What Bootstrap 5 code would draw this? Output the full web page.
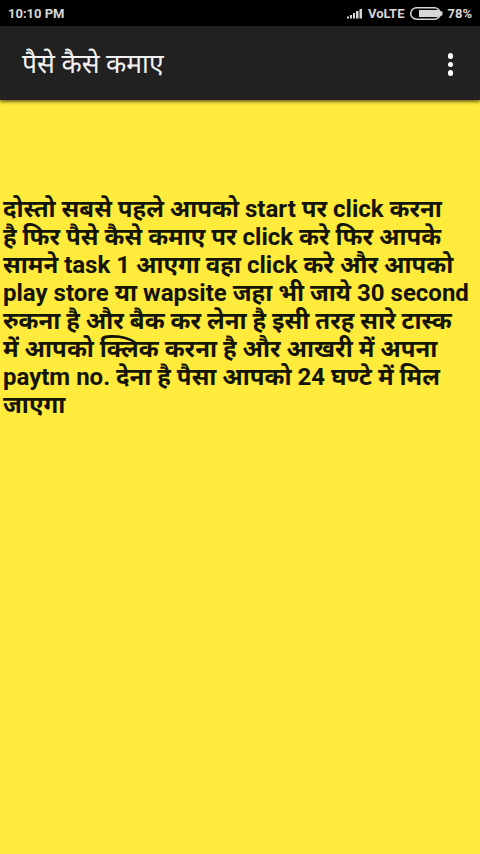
<!DOCTYPE html>
<html lang="hi">
<head>
<meta charset="utf-8">
<meta name="viewport" content="width=device-width, initial-scale=1">
<link href="https://cdn.jsdelivr.net/npm/bootstrap@5.3.0/dist/css/bootstrap.min.css" rel="stylesheet">
<style>
html, body { height: 100%; }
body { background: #ffeb3b; font-family: "Roboto", "Noto Sans", sans-serif; overflow: hidden; }
.screen-wrap { height: 854px; }
.status-strip { height: 26px; background: #000; color: #d8d8d8; font-size: 13px; font-weight: 700; padding: 0 8px; }
.status-strip span { line-height: 1; }
.battery-icon { margin-left: 2px; }
.app-strip { height: 74px; background: #212121; padding: 3px 26px 0 22px; box-shadow: 0 2px 3px rgba(0,0,0,.55); position: relative; z-index: 1; }
.app-title { color: #f2f2f2; font-size: 26.4px; font-weight: 400; margin: 0; line-height: 1; }
.dots { display: flex; flex-direction: column; gap: 3px; margin-right: 1px; }
.dots i { display: block; width: 5.5px; height: 5.5px; border-radius: 50%; background: #fff; }
.body-copy { padding: 94.5px 0 0 3px; margin: 0; color: #141408; font-size: 24px; font-weight: 700; line-height: 28.1px; white-space: nowrap; }
.body-copy span { display: block; }
</style>
</head>
<body>
<div class="screen-wrap d-flex flex-column">
  <div class="status-strip d-flex align-items-center justify-content-between flex-shrink-0">
    <span>10:10 PM</span>
    <div class="d-flex align-items-center gap-1">
      <svg width="17" height="11" viewBox="0 0 17 11" aria-hidden="true"><g fill="#d8d8d8"><rect x="0" y="8.5" width="2" height="2"/><rect x="3" y="7" width="2" height="3.5"/><rect x="6" y="5" width="2" height="5.500"/><rect x="9" y="3" width="2.500" height="7.500"/><rect x="12.500" y="1" width="2.500" height="9.500"/></g></svg>
      <span>VoLTE</span>
      <svg class="battery-icon" width="33" height="13" viewBox="0 0 33 13" aria-hidden="true"><rect x=".75" y=".75" width="29.5" height="11.5" rx="5.75" fill="none" stroke="#d8d8d8" stroke-width="1.500"/><path d="M9 3h19a3.500 3.500 0 0 1 0 7H9z" fill="#d8d8d8"/><rect x="31" y="4.500" width="1.500" height="4" fill="#d8d8d8"/></svg>
      <span>78%</span>
    </div>
  </div>
  <div class="app-strip d-flex align-items-center justify-content-between flex-shrink-0">
    <h1 class="app-title">पैसे कैसे कमाए</h1>
    <div class="dots" aria-label="menu"><i></i><i></i><i></i></div>
  </div>
  <p class="body-copy">
    <span>दोस्तो सबसे पहले आपको start पर click करना</span>
    <span>है फिर पैसे कैसे कमाए पर click करे फिर आपके</span>
    <span>सामने task 1 आएगा वहा click करे और आपको</span>
    <span>play store या wapsite जहा भी जाये 30 second</span>
    <span>रुकना है और बैक कर लेना है इसी तरह सारे टास्क</span>
    <span>में आपको क्लिक करना है और आखरी में अपना</span>
    <span>paytm no. देना है पैसा आपको 24 घण्टे में मिल</span>
    <span>जाएगा</span>
  </p>
</div>
<script src="https://cdn.jsdelivr.net/npm/bootstrap@5.3.0/dist/js/bootstrap.bundle.min.js"></script>
</body>
</html>
